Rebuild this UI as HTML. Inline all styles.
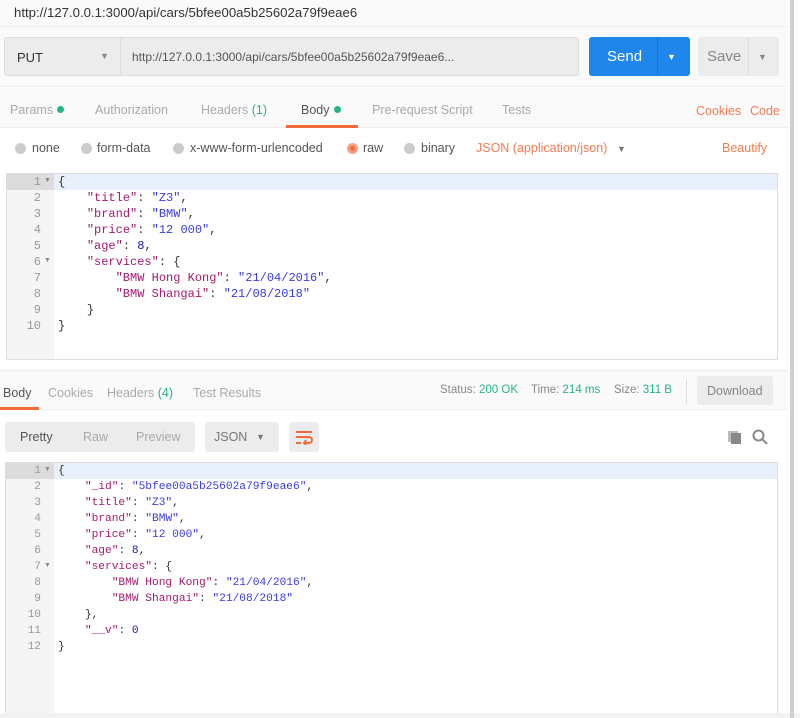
<!DOCTYPE html>
<html><head><style>
*{margin:0;padding:0;box-sizing:border-box}
body{width:800px;height:718px;background:#fff;font-family:"Liberation Sans",sans-serif;position:relative;overflow:hidden;color:#808080}
.a{position:absolute;white-space:nowrap}
pre.a{white-space:pre}
.mono{font-family:"Liberation Mono",monospace}
.k{color:#a31a6f}.s{color:#3b3be6}.n{color:#1a1aa6}.p{color:#333}
.dot{display:inline-block;width:7px;height:7px;border-radius:50%;background:#26b47f;margin-left:4px;vertical-align:1px}
.rad{position:absolute;width:11px;height:11px;border-radius:50%;background:#ccc}
.t{font-size:12.5px}
</style></head><body>
<div class="a" style="left:0;top:0;width:788px;height:27px;background:#fafafa;border-bottom:1px solid #eee"></div>
<div class="a" style="left:14px;top:5px;font-size:13.2px;color:#333">http://127.0.0.1:3000/api/cars/5bfee00a5b25602a79f9eae6</div>
<div class="a" style="left:0;top:27px;width:788px;height:60px;background:#fafafa;border-bottom:1px solid #eee"></div>
<div class="a" style="left:4px;top:37px;width:575px;height:39px;background:#ececec;border:1px solid #ddd;border-radius:3px"></div>
<div class="a" style="left:120px;top:38px;width:1px;height:37px;background:#ddd"></div>
<div class="a" style="left:17px;top:50px;font-size:13px;color:#333">PUT</div>
<div class="a" style="left:100px;top:51px;font-size:9px;color:#888">▼</div>
<div class="a" style="left:132px;top:50px;font-size:12px;color:#555">http://127.0.0.1:3000/api/cars/5bfee00a5b25602a79f9eae6...</div>
<div class="a" style="left:589px;top:37px;width:101px;height:39px;background:#1f86eb;border-radius:3px"></div>
<div class="a" style="left:657px;top:37px;width:1px;height:39px;background:#1a76d4"></div>
<div class="a" style="left:607px;top:48px;font-size:15px;color:#fff">Send</div>
<div class="a" style="left:667px;top:52px;font-size:9px;color:#fff">▼</div>
<div class="a" style="left:698px;top:37px;width:81px;height:39px;background:#ececec;border-radius:3px"></div>
<div class="a" style="left:748px;top:37px;width:1px;height:39px;background:#ddd"></div>
<div class="a" style="left:707px;top:48px;font-size:15px;color:#888">Save</div>
<div class="a" style="left:758px;top:52px;font-size:9px;color:#888">▼</div>
<div class="a" style="left:0;top:88px;width:788px;height:40px;background:#fafafa;border-bottom:1px solid #eee"></div>
<div class="a t" style="top:103px;left:10px;color:#aaa">Params<span class="dot"></span></div>
<div class="a t" style="top:103px;left:95px;color:#aaa">Authorization</div>
<div class="a t" style="top:103px;left:201px;color:#aaa">Headers <span style="color:#26b47f">(1)</span></div>
<div class="a t" style="top:103px;left:301px;color:#555">Body<span class="dot"></span></div>
<div class="a" style="left:286px;top:125px;width:72px;height:3px;background:#f26b3a"></div>
<div class="a t" style="top:103px;left:372px;color:#aaa">Pre-request Script</div>
<div class="a t" style="top:103px;left:502px;color:#aaa">Tests</div>
<div class="a t" style="top:104px;left:696px;color:#f47b50">Cookies</div>
<div class="a t" style="top:104px;left:750px;color:#f47b50">Code</div>
<div class="rad" style="left:15px;top:143px"></div><div class="a t" style="left:32px;top:141px;color:#555">none</div>
<div class="rad" style="left:81px;top:143px"></div><div class="a t" style="left:97px;top:141px;color:#555">form-data</div>
<div class="rad" style="left:173px;top:143px"></div><div class="a t" style="left:190px;top:141px;color:#555">x-www-form-urlencoded</div>
<div class="rad" style="left:347px;top:143px;background:#f4a080"><div style="margin:3px;width:5px;height:5px;border-radius:50%;background:#f26b3a"></div></div><div class="a t" style="left:363px;top:141px;color:#555">raw</div>
<div class="rad" style="left:404px;top:143px"></div><div class="a t" style="left:421px;top:141px;color:#555">binary</div>
<div class="a t" style="left:476px;top:141px;color:#f47b50">JSON (application/json)</div>
<div class="a" style="left:617px;top:144px;font-size:9px;color:#777">▼</div>
<div class="a t" style="left:722px;top:141px;color:#f47b50">Beautify</div>

<div class="a" style="left:6px;top:173px;width:772px;height:187px;border:1px solid #ddd;background:#fff"></div>
<div class="a" style="left:7px;top:174px;width:47px;height:185px;background:#f5f5f5"></div>
<div class="a" style="left:7px;top:174px;width:770px;height:16px;background:#e8f0fc"></div>
<div class="a" style="left:7px;top:174px;width:47px;height:16px;background:#dcdcdc"></div>
<div class="a mono" style="left:7px;top:174px;width:34px;font-size:12px;line-height:16px;color:#999;text-align:right;white-space:normal">1<br>2<br>3<br>4<br>5<br>6<br>7<br>8<br>9<br>10</div>
<div class="a" style="left:44px;top:177px;font-size:7px;color:#888">▼</div>
<div class="a" style="left:44px;top:257px;font-size:7px;color:#888">▼</div>
<pre class="a mono" style="left:58px;top:174px;font-size:12px;line-height:16px"><span class="p">{</span>
    <span class="k">"title"</span><span class="p">: </span><span class="s">"Z3"</span><span class="p">,</span>
    <span class="k">"brand"</span><span class="p">: </span><span class="s">"BMW"</span><span class="p">,</span>
    <span class="k">"price"</span><span class="p">: </span><span class="s">"12 000"</span><span class="p">,</span>
    <span class="k">"age"</span><span class="p">: </span><span class="n">8</span><span class="p">,</span>
    <span class="k">"services"</span><span class="p">: {</span>
        <span class="k">"BMW Hong Kong"</span><span class="p">: </span><span class="s">"21/04/2016"</span><span class="p">,</span>
        <span class="k">"BMW Shangai"</span><span class="p">: </span><span class="s">"21/08/2018"</span>
    <span class="p">}</span>
<span class="p">}</span></pre>

<div class="a" style="left:0;top:370px;width:788px;height:40px;background:#fafafa;border-bottom:1px solid #eee;border-top:1px solid #eee"></div>
<div class="a t" style="left:3px;top:386px;color:#555">Body</div>
<div class="a" style="left:0;top:407px;width:39px;height:3px;background:#f26b3a"></div>
<div class="a t" style="left:48px;top:386px;color:#aaa">Cookies</div>
<div class="a t" style="left:107px;top:386px;color:#aaa">Headers <span style="color:#26b47f">(4)</span></div>
<div class="a t" style="left:193px;top:386px;color:#aaa">Test Results</div>
<div class="a" style="left:440px;top:384px;font-size:11.5px;color:#888">Status: <span style="color:#26b47f">200 OK</span></div>
<div class="a" style="left:531px;top:384px;font-size:11.5px;color:#888">Time: <span style="color:#26b47f">214 ms</span></div>
<div class="a" style="left:614px;top:384px;font-size:11.5px;color:#888">Size: <span style="color:#26b47f">311 B</span></div>
<div class="a" style="left:686px;top:379px;width:1px;height:25px;background:#ddd"></div>
<div class="a" style="left:697px;top:376px;width:76px;height:29px;background:#ececec;border-radius:3px"></div>
<div class="a t" style="left:707px;top:384px;color:#888">Download</div>

<div class="a" style="left:5px;top:422px;width:190px;height:30px;background:#ececec;border-radius:3px"></div>
<div class="a t" style="left:20px;top:430px;color:#555">Pretty</div>
<div class="a t" style="left:83px;top:430px;color:#aaa">Raw</div>
<div class="a t" style="left:136px;top:430px;color:#aaa">Preview</div>
<div class="a" style="left:205px;top:422px;width:74px;height:30px;background:#ececec;border-radius:3px"></div>
<div class="a t" style="left:214px;top:430px;color:#777">JSON</div>
<div class="a" style="left:256px;top:432px;font-size:9px;color:#777">▼</div>
<div class="a" style="left:289px;top:422px;width:30px;height:30px;background:#ececec;border-radius:3px"></div>
<svg class="a" style="left:295px;top:429px" width="18" height="16" viewBox="0 0 18 16"><path d="M1 3H17M1 8H14a3 3 0 0 1 0 6H9M11 11l-2 3 2 2M1 14H6" stroke="#f26b3a" stroke-width="2" fill="none"/></svg>
<div class="a" style="left:728px;top:431px;width:10px;height:11px;background:#bbb"></div>
<div class="a" style="left:731px;top:433px;width:10px;height:11px;background:#888"></div>
<svg class="a" style="left:752px;top:429px" width="16" height="16" viewBox="0 0 16 16"><circle cx="6.5" cy="6.5" r="5" stroke="#888" stroke-width="2" fill="none"/><path d="M10 10l5 5" stroke="#888" stroke-width="2"/></svg>

<div class="a" style="left:5px;top:462px;width:773px;height:256px;border:1px solid #ddd;background:#fff"></div>
<div class="a" style="left:6px;top:463px;width:48px;height:255px;background:#f5f5f5"></div>
<div class="a" style="left:6px;top:463px;width:771px;height:16px;background:#e8f0fc"></div>
<div class="a" style="left:6px;top:463px;width:48px;height:16px;background:#dcdcdc"></div>
<div class="a mono" style="left:6px;top:463px;width:35px;font-size:11.2px;line-height:16px;color:#999;text-align:right;white-space:normal">1<br>2<br>3<br>4<br>5<br>6<br>7<br>8<br>9<br>10<br>11<br>12</div>
<div class="a" style="left:44px;top:466px;font-size:7px;color:#888">▼</div>
<div class="a" style="left:44px;top:562px;font-size:7px;color:#888">▼</div>
<pre class="a mono" style="left:58px;top:463px;font-size:11.2px;line-height:16px"><span class="p">{</span>
    <span class="k">"_id"</span><span class="p">: </span><span class="s">"5bfee00a5b25602a79f9eae6"</span><span class="p">,</span>
    <span class="k">"title"</span><span class="p">: </span><span class="s">"Z3"</span><span class="p">,</span>
    <span class="k">"brand"</span><span class="p">: </span><span class="s">"BMW"</span><span class="p">,</span>
    <span class="k">"price"</span><span class="p">: </span><span class="s">"12 000"</span><span class="p">,</span>
    <span class="k">"age"</span><span class="p">: </span><span class="n">8</span><span class="p">,</span>
    <span class="k">"services"</span><span class="p">: {</span>
        <span class="k">"BMW Hong Kong"</span><span class="p">: </span><span class="s">"21/04/2016"</span><span class="p">,</span>
        <span class="k">"BMW Shangai"</span><span class="p">: </span><span class="s">"21/08/2018"</span>
    <span class="p">},</span>
    <span class="k">"__v"</span><span class="p">: </span><span class="n">0</span>
<span class="p">}</span></pre>
<div class="a" style="left:0;top:713px;width:800px;height:5px;background:#f2f2f2"></div>
<div class="a" style="left:790px;top:0;width:4px;height:718px;background:#d0d0d0"></div>
</body></html>
